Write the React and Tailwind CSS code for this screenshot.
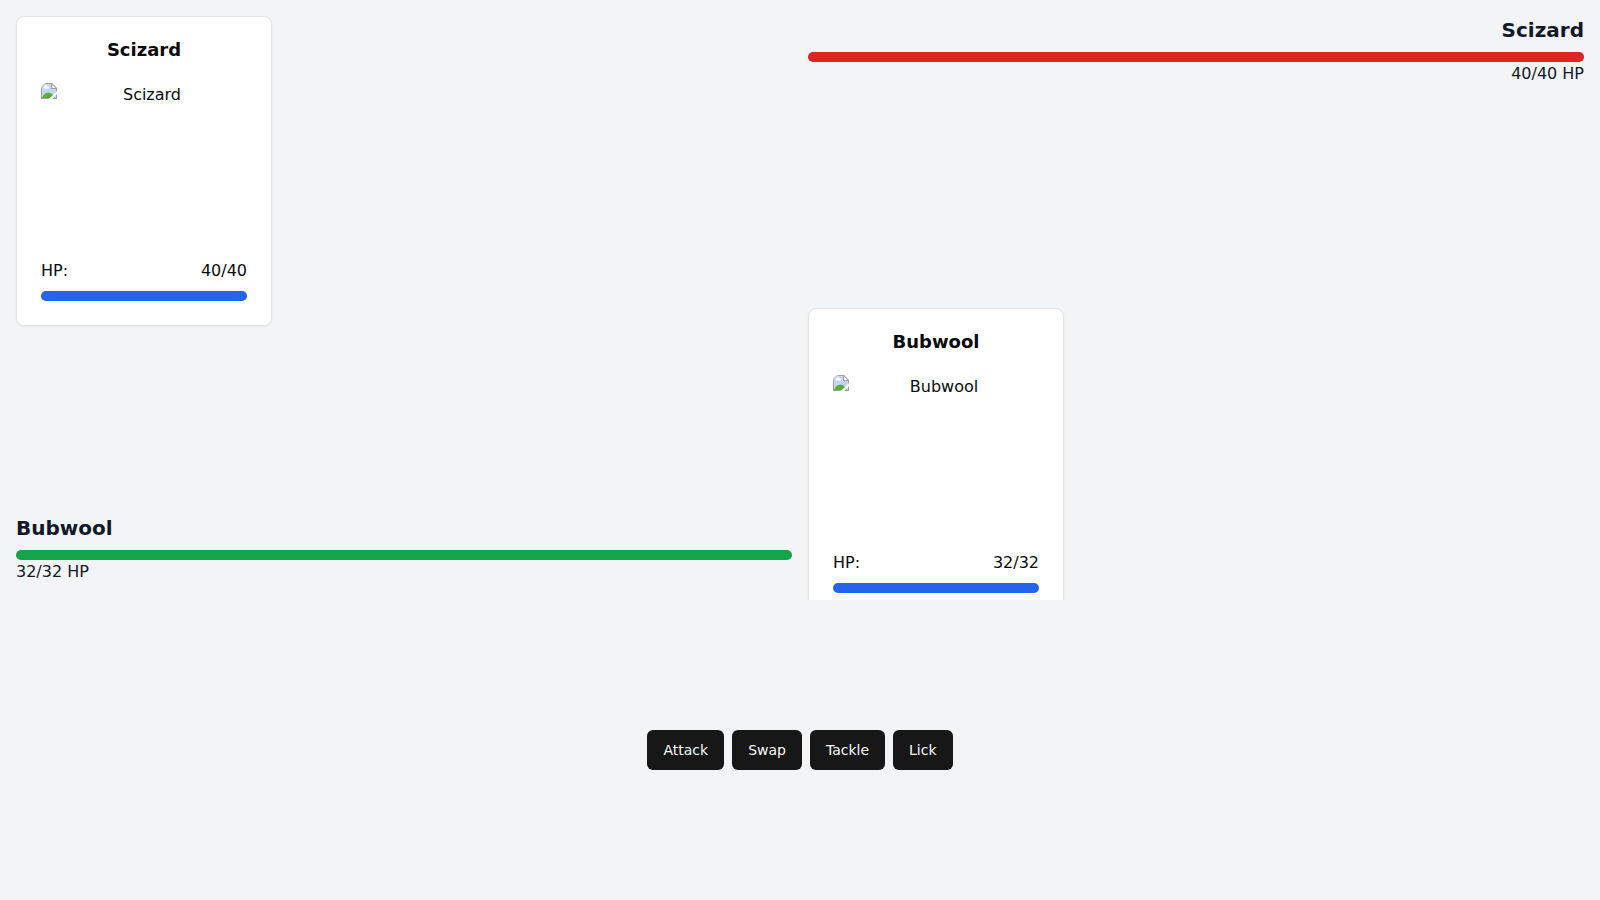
import { useId } from "react";

const enemy = { name: "Scizard", hp: 40, maxHp: 40 };
const player = { name: "Bubwool", hp: 32, maxHp: 32 };
const actions = ["Attack", "Swap", "Tackle", "Lick"];

function HpBar({ creature, color }) {
  return (
    <div
      role="progressbar"
      aria-label={`${creature.name} HP`}
      aria-valuenow={creature.hp}
      aria-valuemin={0}
      aria-valuemax={creature.maxHp}
      className="h-2.5 w-full rounded-full bg-[#e5e7eb]"
    >
      <div
        className={`h-2.5 rounded-full ${color}`}
        style={{ width: `${(creature.hp / creature.maxHp) * 100}%` }}
      />
    </div>
  );
}

function MissingImageIcon() {
  const clip = useId();
  return (
    <svg viewBox="0 0 16 16" className="h-4 w-4 shrink-0" aria-hidden="true">
      <defs>
        <clipPath id={clip}>
          <path d="M0 6a6 6 0 0 1 6-6h10v16H0z" />
        </clipPath>
      </defs>
      <g clipPath={`url(#${clip})`}>
        <path d="M0 0h11l5 5v11H0z" fill="#a0a0a0" />
        <path d="M1 1h9v5h5v9H1z" fill="#c3d4f7" />
        <path d="M11 1.400 14.600 5H11z" fill="#fff" />
        <path d="M3 5.500a1.200 1.200 0 0 1 .5-1.900 1.600 1.600 0 0 1 3.100-.2A1.100 1.100 0 0 1 7.500 5.500z" fill="#fff" />
        <path d="M1 15v-.500C2.500 11.500 4.500 9.700 7.200 9.700S11.500 11 14 15z" fill="#57b034" />
        <path d="M16 8v3.200L11.200 16H7.600l3.600-3.200z" fill="#fff" />
      </g>
    </svg>
  );
}

function CreatureCard({ creature }) {
  return (
    <article className="w-64 rounded-lg border border-[#e5e5e5] bg-white text-[#0a0a0a] shadow-xs">
      <h3 className="p-6 text-center text-lg leading-none font-semibold">{creature.name}</h3>
      <div className="px-6 pb-6">
        <div role="img" aria-label={creature.name} className="mb-4 flex h-40 items-start">
          <MissingImageIcon />
          <span className="flex-1 text-center">{creature.name}</span>
        </div>
        <div className="mb-2 flex justify-between">
          <span>HP:</span>
          <span>
            {creature.hp}/{creature.maxHp}
          </span>
        </div>
        <HpBar creature={creature} color="bg-[#2563eb]" />
      </div>
    </article>
  );
}

function CreatureStatus({ creature, color, className }) {
  return (
    <div className={`flex flex-col ${className}`}>
      <h2 className="mb-2 text-xl font-bold">{creature.name}</h2>
      <HpBar creature={creature} color={color} />
      <p>
        {creature.hp}/{creature.maxHp} HP
      </p>
    </div>
  );
}

export default function App() {
  return (
    <main className="flex h-screen flex-col bg-[#f3f4f6] font-['DejaVu_Sans',sans-serif] text-base text-[#111827]">
      <section className="grid h-2/3 grid-cols-2 grid-rows-2 gap-4 overflow-hidden p-4">
        <div>
          <CreatureCard creature={enemy} />
        </div>
        <CreatureStatus creature={enemy} color="bg-[#dc2626]" className="justify-start text-right" />
        <CreatureStatus creature={player} color="bg-[#16a34a]" className="justify-end" />
        <div>
          <CreatureCard creature={player} />
        </div>
      </section>
      <section className="flex h-1/3 items-center justify-center gap-2">
        {actions.map((action) => (
          <button
            key={action}
            type="button"
            className="h-10 rounded-md bg-[#171717] px-4 text-sm font-medium text-[#fafafa] hover:bg-[#2e2e2e]"
          >
            {action}
          </button>
        ))}
      </section>
    </main>
  );
}
